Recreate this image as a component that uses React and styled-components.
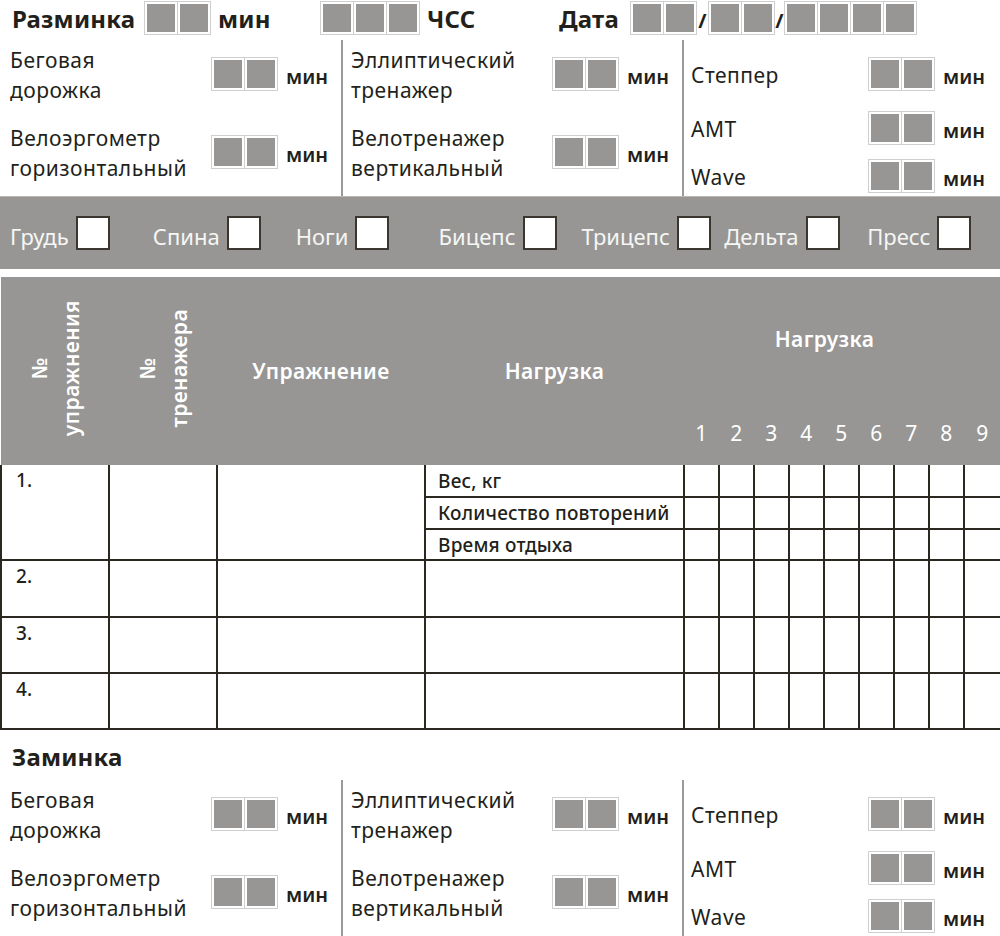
import React from "react";
import styled, { createGlobalStyle } from "styled-components";

const INK = "#231f1a";
const GRAY = "#979694";
const LINE = "#2b2721";

const GlobalStyle = createGlobalStyle`
  body {
    margin: 0;
    background: #ffffff;
  }
`;

const Page = styled.div`
  width: 1000px;
  height: 936px;
  overflow: hidden;
  font-family: "Noto Sans", "Open Sans", sans-serif;
  color: ${INK};
  background: #ffffff;
`;

const TitleRow = styled.div`
  display: flex;
  align-items: center;
  height: ${(p) => p.$h || 38}px;
  padding-top: ${(p) => p.$pt || 0}px;
  box-sizing: border-box;
`;

const Title = styled.div`
  font-size: 24px;
  font-weight: 700;
  letter-spacing: 0.2px;
  line-height: 36px;
  width: ${(p) => (p.$w ? `${p.$w}px` : "auto")};
  padding-left: ${(p) => p.$pl || 0}px;
  box-sizing: border-box;
  flex-shrink: 0;
  white-space: nowrap;
`;

const Slash = styled.div`
  width: ${(p) => p.$w}px;
  text-align: center;
  font-size: 20px;
  font-weight: 700;
  line-height: 36px;
  margin-top: 4px;
  flex-shrink: 0;
`;

const BoxGroup = styled.div`
  display: flex;
  flex-shrink: 0;
  margin-top: ${(p) => p.$mt || 0}px;
`;

const Cell = styled.div`
  width: 34px;
  height: 34px;
  box-sizing: border-box;
  border: 1px solid #cfcfcf;
  background: ${GRAY};
  box-shadow: inset 0 0 0 2px #ffffff;
  & + & {
    margin-left: -1px;
  }
`;

function Boxes({ n, mt }) {
  return (
    <BoxGroup $mt={mt}>
      {Array.from({ length: n }).map((_, i) => (
        <Cell key={i} />
      ))}
    </BoxGroup>
  );
}

const Section = styled.div`
  display: grid;
  grid-template-columns: 341px 341px 318px;
  height: 158px;
  padding-top: 2px;
  box-sizing: border-box;
`;

const Column = styled.div`
  display: flex;
  flex-direction: column;
  padding: 17px ${(p) => p.$pr}px 0 ${(p) => p.$pl}px;
  border-left: ${(p) => (p.$divider ? `2px solid #9a9a9a` : "none")};
  box-sizing: border-box;
`;

const Row = styled.div`
  display: grid;
  grid-template-columns: 1fr 68px 41px;
  grid-template-rows: 34px;
  column-gap: 7px;
  align-items: center;
  height: 34px;
  flex-shrink: 0;
  margin-top: ${(p) => p.$mt || 0}px;
`;

const Label = styled.div`
  font-size: 21px;
  letter-spacing: 0.5px;
  line-height: 30px;
  white-space: nowrap;
  margin-top: 2px;
`;

const Unit = styled.div`
  font-size: 20px;
  font-weight: 600;
  line-height: 30px;
  margin-top: 6px;
`;

const MuscleBar = styled.div`
  display: grid;
  grid-template-columns: repeat(7, 1fr);
  height: 73px;
  background: ${GRAY};
  border-top: 1px solid #b9b8b6;
  box-sizing: border-box;
`;

const Muscle = styled.div`
  display: flex;
  align-items: center;
  gap: 7px;
  padding-left: 10px;
  color: #f6f6f4;
  font-size: 22px;
`;

const MuscleName = styled.span`
  margin-top: 5px;
`;

const Check = styled.div`
  width: 34px;
  height: 34px;
  box-sizing: border-box;
  background: #ffffff;
  border: 2px solid #3b362f;
  flex-shrink: 0;
`;

const Spacer = styled.div`
  height: ${(p) => p.$h}px;
`;

const Table = styled.table`
  width: 1000px;
  table-layout: fixed;
  border-collapse: collapse;
  border-spacing: 0;
`;

const HeadCell = styled.th`
  background: ${GRAY};
  color: #ffffff;
  font-size: 21px;
  font-weight: ${(p) => (p.$light ? 400 : 600)};
  letter-spacing: 0.4px;
  text-align: center;
  vertical-align: middle;
  padding: 0 ${(p) => p.$pr || 0}px 0 0;
  height: ${(p) => p.$h || 0}px;
  border: none;
`;

const Vertical = styled.div`
  display: inline-block;
  writing-mode: vertical-rl;
  text-orientation: sideways;
  transform: rotate(180deg);
  line-height: 32px;
  text-align: center;
`;

const BodyCell = styled.td`
  border: 2px solid ${LINE};
  border-top: ${(p) => (p.$first ? "none" : `2px solid ${LINE}`)};
  height: ${(p) => p.$h}px;
  padding: ${(p) => (p.$top ? "4px 14px 0" : "0 12px")};
  vertical-align: ${(p) => (p.$top ? "top" : "middle")};
  font-size: 19px;
  font-weight: 500;
  letter-spacing: 0.2px;
  line-height: 22px;
  box-sizing: border-box;
  white-space: nowrap;
`;

const colWidths = [108, 108, 208, 259, 35, 35, 35, 35, 35, 35, 35, 35, 37];
const nums = [1, 2, 3, 4, 5, 6, 7, 8, 9];
const muscles = ["Грудь", "Спина", "Ноги", "Бицепс", "Трицепс", "Дельта", "Пресс"];

function Machines() {
  return (
    <Section>
      <Column $pl={10} $pr={14}>
        <Row>
          <Label>
            Беговая
            <br />
            дорожка
          </Label>
          <Boxes n={2} />
          <Unit>мин</Unit>
        </Row>
        <Row $mt={44}>
          <Label>
            Велоэргометр
            <br />
            горизонтальный
          </Label>
          <Boxes n={2} />
          <Unit>мин</Unit>
        </Row>
      </Column>
      <Column $divider $pl={8} $pr={14}>
        <Row>
          <Label>
            Эллиптический
            <br />
            тренажер
          </Label>
          <Boxes n={2} />
          <Unit>мин</Unit>
        </Row>
        <Row $mt={44}>
          <Label>
            Велотренажер
            <br />
            вертикальный
          </Label>
          <Boxes n={2} />
          <Unit>мин</Unit>
        </Row>
      </Column>
      <Column $divider $pl={7} $pr={16}>
        <Row>
          <Label>Степпер</Label>
          <Boxes n={2} />
          <Unit>мин</Unit>
        </Row>
        <Row $mt={20}>
          <Label>AMT</Label>
          <Boxes n={2} />
          <Unit>мин</Unit>
        </Row>
        <Row $mt={14}>
          <Label>Wave</Label>
          <Boxes n={2} />
          <Unit>мин</Unit>
        </Row>
      </Column>
    </Section>
  );
}

function NumberCells({ h, first }) {
  return nums.map((n) => <BodyCell key={n} $h={h} $first={first} />);
}

export default function App() {
  return (
    <Page>
      <GlobalStyle />
      <TitleRow>
        <Title $w={144} $pl={12}>Разминка</Title>
        <Boxes n={2} mt={-2} />
        <Title $w={109} $pl={7}>мин</Title>
        <Boxes n={3} mt={-2} />
        <Title $w={139} $pl={7}>ЧСС</Title>
        <Title $w={71}>Дата</Title>
        <Boxes n={2} mt={-2} />
        <Slash $w={11}>/</Slash>
        <Boxes n={2} mt={-2} />
        <Slash $w={9}>/</Slash>
        <Boxes n={4} mt={-2} />
      </TitleRow>

      <Machines />

      <MuscleBar>
        {muscles.map((m) => (
          <Muscle key={m}>
            <MuscleName>{m}</MuscleName>
            <Check />
          </Muscle>
        ))}
      </MuscleBar>

      <Spacer $h={8} />

      <Table>
        <colgroup>
          {colWidths.map((w, i) => (
            <col key={i} style={{ width: w }} />
          ))}
        </colgroup>
        <thead>
          <tr>
            <HeadCell rowSpan={2}>
              <Vertical>
                №<br />
                упражнения
              </Vertical>
            </HeadCell>
            <HeadCell rowSpan={2}>
              <Vertical>
                №<br />
                тренажера
              </Vertical>
            </HeadCell>
            <HeadCell rowSpan={2}>Упражнение</HeadCell>
            <HeadCell rowSpan={2}>Нагрузка</HeadCell>
            <HeadCell colSpan={9} $h={123} $pr={36}>
              Нагрузка
            </HeadCell>
          </tr>
          <tr>
            {nums.map((n) => (
              <HeadCell key={n} $h={65} $light>
                {n}
              </HeadCell>
            ))}
          </tr>
        </thead>
        <tbody>
          <tr>
            <BodyCell rowSpan={3} $top $first>
              1.
            </BodyCell>
            <BodyCell rowSpan={3} $first />
            <BodyCell rowSpan={3} $first />
            <BodyCell $h={32} $first>
              Вес, кг
            </BodyCell>
            <NumberCells h={32} first />
          </tr>
          <tr>
            <BodyCell $h={32}>Количество повторений</BodyCell>
            <NumberCells h={32} />
          </tr>
          <tr>
            <BodyCell $h={31}>Время отдыха</BodyCell>
            <NumberCells h={31} />
          </tr>
          {[2, 3, 4].map((r) => (
            <tr key={r}>
              <BodyCell $h={r === 2 ? 57 : 56} $top>
                {r}.
              </BodyCell>
              <BodyCell />
              <BodyCell />
              <BodyCell />
              <NumberCells h={r === 2 ? 57 : 56} />
            </tr>
          ))}
        </tbody>
      </Table>

      <TitleRow $h={48} $pt={6}>
        <Title $pl={12}>Заминка</Title>
      </TitleRow>

      <Machines />
    </Page>
  );
}
